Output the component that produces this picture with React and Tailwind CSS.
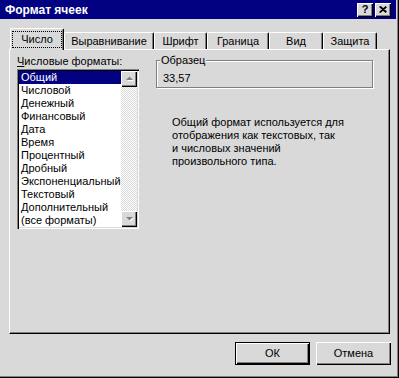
import React from "react";

const formats = [
	"Общий",
	"Числовой",
	"Денежный",
	"Финансовый",
	"Дата",
	"Время",
	"Процентный",
	"Дробный",
	"Экспоненциальный",
	"Текстовый",
	"Дополнительный",
	"(все форматы)",
];

const raised =
	"shadow-[inset_1px_1px_#fff,inset_-1px_-1px_#000,inset_-2px_-2px_#808080]";

function Arrow({ down }) {
	return (
		<svg width="9" height="6" viewBox="0 0 9 6">
			{down ? (
				<>
					<polygon points="2,2 9,2 5.5,5.5" fill="#fff" />
					<polygon points="1,1 8,1 4.5,4.5" fill="#808080" />
				</>
			) : (
				<>
					<polygon points="2,5 9,5 5.5,1.5" fill="#fff" />
					<polygon points="1,4 8,4 4.5,0.5" fill="#808080" />
				</>
			)}
		</svg>
	);
}

function App() {
	return (
		<div className="w-[399px] h-[378px] bg-[#d9d9d9] shadow-[inset_-1px_-1px_#000,inset_-2px_-2px_#808080] font-['Liberation_Sans',Arial,sans-serif] text-[11px] text-black overflow-hidden">
			{/* title bar */}
			<div className="h-[19px] w-[396px] bg-[#000080] flex items-center pl-[5px] pr-[5px]">
				<span className="text-white font-bold text-[12px] leading-none">
					Формат ячеек
				</span>
				<div className="ml-auto flex gap-[2px]">
					<div
						className={`w-[16px] h-[14px] bg-[#d9d9d9] flex items-center justify-center font-bold text-[11px] leading-none pb-px ${raised}`}
					>
						?
					</div>
					<div
						className={`w-[16px] h-[14px] bg-[#d9d9d9] flex items-center justify-center ${raised}`}
					>
						<svg width="8" height="7" viewBox="0 0 8 7">
							<path d="M0.5 0.5 L7 6.5 M1.5 0.5 L7.5 6 M7 0.5 L0.5 6.5 M7.5 1 L1 6.5" stroke="#000" strokeWidth="1.2" />
						</svg>
					</div>
				</div>
			</div>

			{/* tabs */}
			<div className="mt-[9px] ml-[10px] h-[21px] flex items-end">
				<div className="relative z-10 -mb-px w-[54px] h-[22px] bg-[#d9d9d9] border-t border-l border-white border-r border-r-black rounded-tl-[2px] rounded-tr-[2px] shadow-[inset_-1px_0_#808080] flex justify-center pt-[2px]">
					<span className="h-[17px] border border-dotted border-black px-[8px] leading-[15px]">
						Число
					</span>
				</div>
				{[
					["Выравнивание", "w-[90px]"],
					["Шрифт", "w-[53px]"],
					["Граница", "w-[62px]"],
					["Вид", "w-[54px]"],
					["Защита", "w-[54px]"],
				].map(([t, w]) => (
					<div
						key={t}
						className={`${w} h-[17px] border-t border-l border-white border-r border-r-black rounded-tl-[2px] rounded-tr-[2px] shadow-[inset_-1px_0_#808080] flex items-center justify-center leading-[13px]`}
					>
						{t}
					</div>
				))}
			</div>

			{/* panel */}
			<div className="ml-[9px] w-[381px] h-[285px] border-t border-l border-white border-r border-b border-r-black border-b-black shadow-[inset_-1px_-1px_#808080] flex pt-[5px] pl-[7px]">
				<div className="flex flex-col">
					<div className="leading-[13px] mb-px">
						<span className="underline">Ч</span>исловые форматы:
					</div>
					<div className="w-[122px] h-[160px] bg-white p-[2px] flex shadow-[inset_1px_1px_#808080,inset_2px_2px_#000,inset_-1px_-1px_#fff,inset_-2px_-2px_#d9d9d9]">
						<div className="flex-1 flex flex-col">
							{formats.map((f, i) => (
								<div
									key={f}
									className={`h-[13px] leading-[13px] pl-[2px] ${
										i === 0 ? "bg-[#000080] text-white" : ""
									}`}
								>
									{f}
								</div>
							))}
						</div>
						<div className="w-[16px] flex flex-col">
							<div
								className={`h-[16px] bg-[#d9d9d9] flex items-center justify-center ${raised}`}
							>
								<Arrow />
							</div>
							<div className="flex-1 bg-[image:repeating-conic-gradient(#fff_0%_25%,#d9d9d9_0%_50%)] bg-[length:2px_2px]"></div>
							<div
								className={`h-[16px] bg-[#d9d9d9] flex items-center justify-center ${raised}`}
							>
								<Arrow down />
							</div>
						</div>
					</div>
				</div>

				<div className="ml-[17px] w-[217px] flex flex-col">
					<div className="relative mt-[5px] h-[28px] border border-[#808080] shadow-[inset_1px_1px_#fff,1px_1px_#fff] pl-[6px] pt-[11px] leading-[13px]">
						<span className="absolute left-[3px] top-[-7px] px-px bg-[#d9d9d9] leading-[13px]">
							Образец
						</span>
						33,57
					</div>
					<div className="mt-[28px] ml-[16px] leading-[13px]">
						Общий формат используется для
						<br />
						отображения как текстовых, так
						<br />
						и числовых значений
						<br />
						произвольного типа.
					</div>
				</div>
			</div>

			{/* buttons */}
			<div className="mt-[8px] pr-[8px] flex justify-end gap-[6px]">
				<div className="w-[75px] h-[23px] border border-black shadow-[inset_1px_1px_#fff,inset_-1px_-1px_#000,inset_-2px_-2px_#808080] flex items-center justify-center">
					ОК
				</div>
				<div
					className={`w-[75px] h-[23px] flex items-center justify-center ${raised}`}
				>
					Отмена
				</div>
			</div>
		</div>
	);
}

export default App;
